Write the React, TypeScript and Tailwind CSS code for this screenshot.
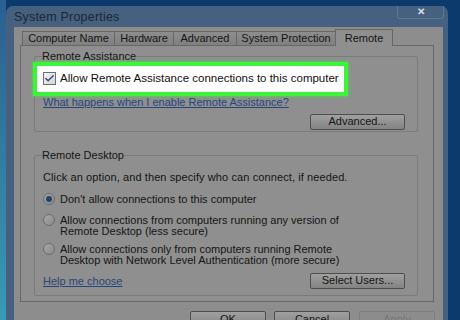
import { Check } from 'lucide-react';

const TABS = [
  { label: 'Computer Name', w: 'w-[93px]' },
  { label: 'Hardware', w: 'w-[60px]' },
  { label: 'Advanced', w: 'w-[64px]' },
  { label: 'System Protection', w: 'w-[100px]' },
];

function Button({ label, className = '', disabled = false }: { label: string; className?: string; disabled?: boolean }) {
  return (
    <div
      className={`h-[16px] flex items-center justify-center rounded-[2px] border text-[11px] leading-none
        ${disabled
          ? 'border-[#7d7d7d] bg-[#8c8c8c] text-[#777]'
          : 'border-[#4e4e4e] bg-gradient-to-b from-[#a0a0a0] to-[#838383] text-[#141414]'} ${className}`}
    >
      {label}
    </div>
  );
}

function Radio({ checked = false }: { checked?: boolean }) {
  return (
    <div className="w-[12px] h-[12px] shrink-0 rounded-full border border-[#6c6c6c] bg-gradient-to-br from-[#a8a8a8] to-[#8a8a8a] flex items-center justify-center">
      {checked && <div className="w-[6px] h-[6px] rounded-full bg-[#23436d]" />}
    </div>
  );
}

export default function App() {
  return (
    <div className="w-[460px] h-[320px] overflow-hidden flex bg-[#0d3a6d] font-['Liberation_Sans',Arial,sans-serif] text-[#151515]">
      {/* desktop strip on the left */}
      <div className="w-[6px] shrink-0 bg-gradient-to-b from-[#2a5f92] to-[#3a9ab4]" />

      {/* window */}
      <div className="mt-[6px] w-[442px] shrink-0 rounded-t-[7px] bg-[#45617f] flex flex-col">
        {/* title bar */}
        <div className="h-[22px] flex items-start justify-between pl-[8px]">
          <span className="mt-[2px] text-[12.5px] tracking-[0.2px] text-[#1c2733]">System Properties</span>
          <div className="mr-[4px] w-[47px] h-[13px] rounded-b-[3px] border border-t-0 border-[#5d7691] flex items-center justify-center text-[10px] font-bold text-[#d7dde4] leading-none">
            ✕
          </div>
        </div>

        {/* client area */}
        <div className="ml-[8px] mr-[5px] flex-1 bg-[#8d8d8d] pt-[2px] pl-[6px] pr-[8px] flex flex-col">
          {/* tabs */}
          <div className="h-[17px] pl-[2px] flex items-end -mb-[1px] relative z-10 text-[11px]">
            {TABS.map(t => (
              <div
                key={t.label}
                className={`${t.w} h-[14px] -mr-[1px] border border-[#676767] border-b-0 bg-gradient-to-b from-[#8d8d8d] to-[#808080] flex items-center justify-center leading-none mb-[1px]`}
              >
                {t.label}
              </div>
            ))}
            <div className="w-[58px] h-[17px] border border-[#676767] border-b-0 bg-[#8f8f8f] flex items-start justify-center pt-[3px] leading-none">
              Remote
            </div>
          </div>

          {/* tab panel */}
          <div className="h-[257px] mr-[1px] border border-[#676767] bg-[#8f8f8f] pl-[13px] pr-[15px] pt-[4px] text-[11px]">
            {/* Remote Assistance */}
            <fieldset className="border border-[#7b7b7b] rounded-[2px] pl-[8px] pr-[12px] pb-[1px]">
              <legend className="ml-[-1px] px-0 text-[11px] leading-[13px]">Remote Assistance</legend>
              <div className="-ml-[10px] mt-[-1px] w-[315px] h-[34px] border-[4px] border-[#3ef43a] bg-white flex items-center pl-[6px] gap-[4px] shadow-[0_0_3px_#3cf23a]">
                <div className="w-[13px] h-[13px] border border-[#6f6f6f] bg-gradient-to-br from-[#f3f3f3] to-[#d6d6d6] flex items-center justify-center">
                  <Check size={11} strokeWidth={3} className="text-[#2c4b78]" />
                </div>
                <span className="text-[11.5px] text-[#111]">Allow Remote Assistance connections to this computer</span>
              </div>
              <div className="h-[12px] leading-[12px] text-[#27477a] underline">
                What happens when I enable Remote Assistance?
              </div>
              <div className="mt-[6px] flex justify-end">
                <Button label="Advanced..." className="w-[95px]" />
              </div>
            </fieldset>

            {/* Remote Desktop */}
            <fieldset className="mt-[17px] border border-[#7b7b7b] rounded-[2px] pl-[8px] pr-[12px] pb-[6px]">
              <legend className="ml-[-1px] px-0 leading-[13px]">Remote Desktop</legend>
              <div className="mt-[9px] leading-[12px] tracking-[0.1px]">Click an option, and then specify who can connect, if needed.</div>
              <div className="mt-[10px] flex items-center gap-[5px] leading-[12px]">
                <Radio checked />
                <span>Don't allow connections to this computer</span>
              </div>
              <div className="mt-[10px] flex items-start gap-[5px] leading-[11px]">
                <div className="mt-[-1px]"><Radio /></div>
                <span>Allow connections from computers running any version of<br />Remote Desktop (less secure)</span>
              </div>
              <div className="mt-[7px] flex items-start gap-[5px] leading-[11px]">
                <div className="mt-[-1px]"><Radio /></div>
                <span>Allow connections only from computers running Remote<br />Desktop with Network Level Authentication (more secure)</span>
              </div>
              <div className="mt-[7px] flex items-center justify-between">
                <span className="text-[#27477a] underline leading-[12px]">Help me choose</span>
                <Button label="Select Users..." className="w-[95px]" />
              </div>
            </fieldset>
          </div>

          {/* dialog buttons */}
          <div className="mt-[9px] flex justify-end gap-[8px]">
            <Button label="OK" className="w-[76px] h-[17px]" />
            <Button label="Cancel" className="w-[76px] h-[17px]" />
            <Button label="Apply" className="w-[76px] h-[17px] ml-[1px]" disabled />
          </div>
        </div>
      </div>
    </div>
  );
}
